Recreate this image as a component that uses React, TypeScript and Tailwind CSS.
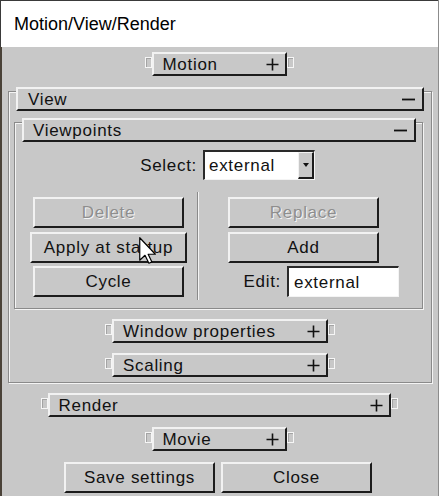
import React from "react";

const UP =
  "bg-[#c8c8c8] border-t-2 border-l-2 border-b-2 border-r-2 border-t-[#f2f2f2] border-l-[#f2f2f2] border-b-[#1c1c1c] border-r-[#1c1c1c]";
const ETCH = "border border-[#8a8a8a] shadow-[1px_1px_0_#f4f4f4,inset_1px_1px_0_#f4f4f4]";
const INSET =
  "bg-white border-t-2 border-l-2 border-t-[#2a2a2a] border-l-[#2a2a2a] border-b border-r border-b-[#f4f4f4] border-r-[#f4f4f4]";

function Plus() {
  return (
    <svg width="13" height="13" viewBox="0 0 13 13">
      <path d="M6.5 0.5v12M0.5 6.5h12" stroke="#111" strokeWidth="1.6" />
    </svg>
  );
}

function Minus() {
  return (
    <svg width="13" height="13" viewBox="0 0 13 13">
      <path d="M0 6.5h13" stroke="#111" strokeWidth="1.8" />
    </svg>
  );
}

function Tab() {
  return (
    <div className="mt-[5px] w-[7px] h-[11px] border border-[#f6f6f6] bg-[#c8c8c8] shadow-[inset_1px_1px_0_#a4a4a4]" />
  );
}

function Collapsed({ label, wcls }: { label: string; wcls: string }) {
  return (
    <div className="flex justify-center items-start">
      <Tab />
      <div className={`${wcls} h-[24px] ${UP} flex items-center justify-between pl-[9px] pr-[6px]`}>
        <span>{label}</span>
        <Plus />
      </div>
      <Tab />
    </div>
  );
}

function Btn({
  label,
  wcls,
  disabled,
}: {
  label: string;
  wcls: string;
  disabled?: boolean;
}) {
  return (
    <div className={`${wcls} h-[31px] ${UP} flex items-center justify-center`}>
      <span
        className={
          disabled ? "text-[#8e8e8e] [text-shadow:1px_1px_0_#f6f6f6]" : "text-[#111]"
        }
      >
        {label}
      </span>
    </div>
  );
}

export default function App() {
  return (
    <div className="relative w-[439px] h-[496px] overflow-hidden flex flex-col font-['Liberation_Sans',Arial,Helvetica,sans-serif] text-[17px] tracking-[0.7px] text-[#111] leading-none border-r border-r-[#8c8c8c]">
      {/* Title bar */}
      <div className="h-[47px] shrink-0 bg-white border-t border-t-[#3a3a3a] border-l border-l-[#3a3a3a] flex items-center pl-[13px]">
        <span className="text-[18px] tracking-normal text-black">Motion/View/Render</span>
      </div>

      {/* Content */}
      <div className="flex-1 bg-[#c8c8c8] border-l-2 border-l-[#4a4238] flex flex-col">
        <div className="pt-[5px] -ml-[2px]">
          <Collapsed label="Motion" wcls="w-[135px]" />
        </div>

        {/* View group */}
        <div className={`mt-[15px] ml-[6px] w-[424px] ${ETCH} flex flex-col`}>
          <div className={`-mt-[5px] ml-[7px] w-[408px] h-[24px] ${UP} flex items-center justify-between pl-[10px] pr-[7px]`}>
            <span>View</span>
            <Minus />
          </div>

          {/* Viewpoints group */}
          <div className={`mt-[11px] ml-[5px] w-[409px] ${ETCH} flex flex-col pb-[8px]`}>
            <div className={`-mt-[5px] ml-[7px] w-[394px] h-[24px] ${UP} flex items-center justify-between pl-[9px] pr-[7px]`}>
              <span>Viewpoints</span>
              <Minus />
            </div>

            {/* Select row */}
            <div className="mt-[8px] flex items-center pl-[122px]">
              <div className="w-[60px] text-right">Select:</div>
              <div className={`ml-[6px] w-[112px] h-[30px] ${INSET} flex items-stretch`}>
                <div className="flex-1 flex items-center pl-[4px]">external</div>
                <div className="w-[16px] bg-[#c8c8c8] border-t border-l border-t-[#f2f2f2] border-l-[#f2f2f2] border-b-2 border-r-2 border-b-[#1c1c1c] border-r-[#1c1c1c] flex items-center justify-center">
                  <svg width="6" height="4" viewBox="0 0 6 4">
                    <path d="M0 0h6L3 4z" fill="#111" />
                  </svg>
                </div>
              </div>
            </div>

            {/* Buttons row */}
            <div className="mt-[12px] flex items-start pl-[15px]">
              <div className="w-[157px] pt-[5px] flex flex-col">
                <div className="px-[3px]">
                  <Btn label="Delete" wcls="w-[151px]" disabled />
                </div>
                <div className="mt-[4px]">
                  <Btn label="Apply at startup" wcls="w-[157px]" />
                </div>
                <div className="mt-[3px] px-[3px]">
                  <Btn label="Cycle" wcls="w-[151px]" />
                </div>
              </div>
              <div className="ml-[10px] w-[2px] h-[108px] border-l border-l-[#8a8a8a] bg-[#f4f4f4]" />
              <div className="ml-[29px] w-[171px] pt-[5px] flex flex-col">
                <Btn label="Replace" wcls="w-[151px]" disabled />
                <div className="mt-[4px]">
                  <Btn label="Add" wcls="w-[151px]" />
                </div>
                <div className="mt-[3px] flex items-center justify-end">
                  <span>Edit:</span>
                  <div className={`ml-[6px] w-[112px] h-[31px] ${INSET} flex items-center pl-[5px]`}>
                    external
                  </div>
                </div>
              </div>
            </div>
          </div>

          <div className="mt-[10px]">
            <Collapsed label="Window properties" wcls="w-[216px]" />
          </div>
          <div className="mt-[10px] pb-[5px]">
            <Collapsed label="Scaling" wcls="w-[216px]" />
          </div>
        </div>

        <div className="mt-[10px] -ml-[2px]">
          <Collapsed label="Render" wcls="w-[343px]" />
        </div>
        <div className="mt-[10px] -ml-[2px]">
          <Collapsed label="Movie" wcls="w-[135px]" />
        </div>

        <div className="mt-[11px] flex justify-center -ml-[4px] gap-[6px]">
          <Btn label="Save settings" wcls="w-[151px]" />
          <Btn label="Close" wcls="w-[151px]" />
        </div>
      </div>

      {/* Mouse cursor */}
      <svg
        className="absolute left-[139px] top-[237px]"
        width="18"
        height="27"
        viewBox="0 0 12 18"
      >
        <path
          d="M0.5 0.5V15.5L4 12.2L6.6 17.5L8.6 16.6L6.1 11.5H10.9Z"
          fill="#fff"
          stroke="#000"
          strokeWidth="0.8"
          strokeLinejoin="round"
        />
      </svg>
    </div>
  );
}
